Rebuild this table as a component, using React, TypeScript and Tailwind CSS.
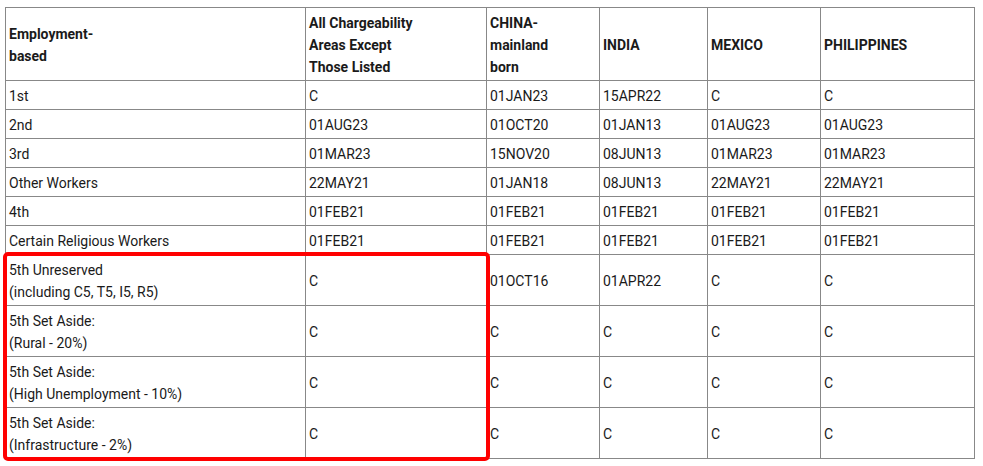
import React from "react";

const header = [
  "Employment-\nbased",
  "All Chargeability\nAreas Except\nThose Listed",
  "CHINA-\nmainland\nborn",
  "INDIA",
  "MEXICO",
  "PHILIPPINES",
];

const rows: string[][] = [
  ["1st", "C", "01JAN23", "15APR22", "C", "C"],
  ["2nd", "01AUG23", "01OCT20", "01JAN13", "01AUG23", "01AUG23"],
  ["3rd", "01MAR23", "15NOV20", "08JUN13", "01MAR23", "01MAR23"],
  ["Other Workers", "22MAY21", "01JAN18", "08JUN13", "22MAY21", "22MAY21"],
  ["4th", "01FEB21", "01FEB21", "01FEB21", "01FEB21", "01FEB21"],
  ["Certain Religious Workers", "01FEB21", "01FEB21", "01FEB21", "01FEB21", "01FEB21"],
  ["5th Unreserved\n(including C5, T5, I5, R5)", "C", "01OCT16", "01APR22", "C", "C"],
  ["5th Set Aside:\n(Rural - 20%)", "C", "C", "C", "C", "C"],
  ["5th Set Aside:\n(High Unemployment - 10%)", "C", "C", "C", "C", "C"],
  ["5th Set Aside:\n(Infrastructure - 2%)", "C", "C", "C", "C", "C"],
];

const widths = [300, 181, 113, 108, 113, 154];

function Lines({ text }: { text: string }) {
  return (
    <>
      {text.split("\n").map((l, i) => (
        <div key={i}>{l}</div>
      ))}
    </>
  );
}

export default function App() {
  return (
    <div className="w-[983px] h-[466px] bg-white overflow-hidden font-['Roboto',sans-serif] text-[14px] leading-[22px] text-[#1a1a1a]">
      <div className="relative pt-[7px] pl-[5px]">
        <table className="table-fixed border-collapse w-[970px]">
          <colgroup>
            {widths.map((w, i) => (
              <col key={i} style={{ width: w }} />
            ))}
          </colgroup>
          <thead>
            <tr>
              {header.map((h, i) => (
                <th key={i} className="border border-[#888] px-[3px] pt-[4px] pb-[2px] text-left align-middle font-bold">
                  <Lines text={h} />
                </th>
              ))}
            </tr>
          </thead>
          <tbody>
            {rows.map((r, ri) => (
              <tr key={ri}>
                {r.map((c, ci) => (
                  <td key={ci} className="border border-[#888] px-[3px] pt-[4px] pb-[2px] align-middle">
                    <Lines text={c} />
                  </td>
                ))}
              </tr>
            ))}
          </tbody>
        </table>
        {/* annotation box */}
        <div className="absolute left-[3px] top-[252px] w-[487px] h-[209px] border-[4px] border-[#ff0000] rounded-[5px] pointer-events-none" />
      </div>
    </div>
  );
}
